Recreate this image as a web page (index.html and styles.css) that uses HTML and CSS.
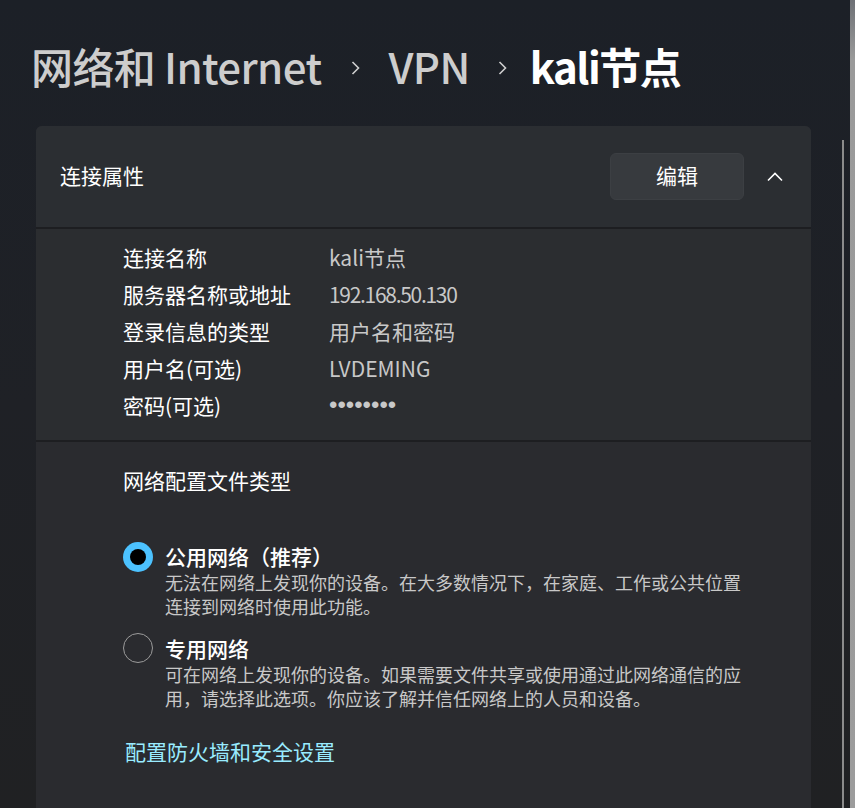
FILE: index.html
```html
<!DOCTYPE html>
<html lang="zh-CN">
<head>
<meta charset="utf-8">
<title>kali节点</title>
<link rel="stylesheet" href="styles.css">
</head>
<body>
<div class="window">
  <main class="content">
    <h1 class="breadcrumb">
      <span class="crumb">网络和 Internet</span>
      <svg class="sep" width="12" height="16" viewBox="0 0 12 16"><path d="M3.5 2 L9.5 8 L3.5 14" fill="none" stroke="#cfcfcf" stroke-width="1.6"/></svg>
      <span class="crumb">VPN</span>
      <svg class="sep sep-last" width="12" height="16" viewBox="0 0 12 16"><path d="M3.5 2 L9.5 8 L3.5 14" fill="none" stroke="#cfcfcf" stroke-width="1.6"/></svg>
      <span class="crumb current">kali节点</span>
    </h1>

    <section class="card">
      <div class="card-header">
        <span class="card-title">连接属性</span>
        <button class="btn">编辑</button>
        <svg class="chev" width="18" height="12" viewBox="0 0 18 12"><path d="M2 9.5 L9 2.5 L16 9.5" fill="none" stroke="#ffffff" stroke-width="1.6"/></svg>
      </div>
      <div class="props">
        <div class="prop"><span class="k">连接名称</span><span class="v">kali节点</span></div>
        <div class="prop"><span class="k">服务器名称或地址</span><span class="v ip">192.168.50.130</span></div>
        <div class="prop"><span class="k">登录信息的类型</span><span class="v">用户名和密码</span></div>
        <div class="prop"><span class="k">用户名(可选)</span><span class="v">LVDEMING</span></div>
        <div class="prop"><span class="k">密码(可选)</span><span class="v dots">••••••••</span></div>
      </div>
      <div class="profile">
        <div class="profile-title">网络配置文件类型</div>
        <div class="radio-item first">
          <span class="radio checked"><span class="dot"></span></span>
          <div class="radio-text">
            <div class="radio-title">公用网络（推荐）</div>
            <div class="radio-desc">无法在网络上发现你的设备。在大多数情况下，在家庭、工作或公共位置<br>连接到网络时使用此功能。</div>
          </div>
        </div>
        <div class="radio-item">
          <span class="radio"></span>
          <div class="radio-text">
            <div class="radio-title">专用网络</div>
            <div class="radio-desc">可在网络上发现你的设备。如果需要文件共享或使用通过此网络通信的应<br>用，请选择此选项。你应该了解并信任网络上的人员和设备。</div>
          </div>
        </div>
        <a class="link" href="#">配置防火墙和安全设置</a>
      </div>
    </section>
  </main>
  <div class="gutter">
    <div class="thumb"></div>
  </div>
  <div class="edge"></div>
</div>
</body>
</html>
```

FILE: styles.css
```css
* { box-sizing: border-box; }
html, body {
  margin: 0;
  padding: 0;
  height: 100%;
  overflow: hidden;
}
body {
  font-family: "Noto Sans CJK SC", "Noto Sans", sans-serif;
  color: #ffffff;
  background: linear-gradient(180deg, #1c2027 0%, #1f2126 50%, #202123 100%);
}
.window {
  display: flex;
  height: 808px;
}
.content {
  width: 842px;
  padding-left: 31px;
}
.breadcrumb {
  margin: 0 0 34px 0;
  padding-top: 39px;
  display: flex;
  align-items: center;
  font-size: 42px;
  font-weight: 500;
  line-height: 53px;
  height: 53px;
  box-sizing: content-box;
}
.crumb { color: #cdcdcd; letter-spacing: -0.6px; }
.crumb.current { color: #ffffff; font-weight: 700; letter-spacing: -1.5px; }
.sep { margin: 4px 27px 0 28px; flex: none; }
.sep.sep-last { margin-left: 26px; margin-right: 22px; }

.card {
  margin-left: 5px;
  width: 775px;
  background: #2a2c30;
  border-radius: 6px 6px 0 0;
  overflow: hidden;
}
.card-header {
  height: 101px;
  display: flex;
  align-items: center;
  padding: 0 27px 0 24px;
  background: #2b2e32;
  border-bottom: 2px solid #1d1e21;
  box-sizing: content-box;
}
.card-title { font-size: 21px; flex: 1; padding-bottom: 3px; }
.btn {
  width: 134px;
  height: 47px;
  background: #373a3e;
  border: 1px solid #3c3f43;
  border-radius: 6px;
  color: #ffffff;
  font-family: inherit;
  font-size: 21px;
  padding: 0 0 3px 0;
  margin-right: 22px;
}
.chev { display: block; }

.props {
  padding: 9px 0 17px 87px;
  border-bottom: 2px solid #1d1e21;
  background: #2b2d30;
}
.prop {
  display: flex;
  height: 37px;
  align-items: center;
  font-size: 21px;
}
.k { width: 206px; color: #ffffff; }
.v { color: #c8c8c8; }
.v.ip { letter-spacing: -1.3px; }
.v.dots {
  font-family: "Liberation Sans", sans-serif;
  font-size: 24px;
  letter-spacing: 0;
}

.profile {
  padding: 23px 0 60px 87px;
  background: #2a2b2f;
}
.profile-title {
  font-size: 21px;
  line-height: 30px;
  margin-bottom: 47px;
}
.radio-item {
  display: flex;
  gap: 12px;
  margin-bottom: 16px;
}
.radio {
  width: 30px;
  height: 30px;
  border-radius: 50%;
  border: 1.5px solid #9b9b9b;
  margin-top: -1px;
  flex: none;
  display: flex;
  align-items: center;
  justify-content: center;
}
.radio.checked {
  background: #4cc2ff;
  border: none;
  margin-top: 0;
}
.dot {
  width: 16px;
  height: 16px;
  border-radius: 50%;
  background: #000000;
}
.radio-title {
  font-size: 21px;
  line-height: 28px;
  font-weight: 500;
}
.radio-desc {
  font-size: 18px;
  line-height: 24px;
  color: #c8c8c8;
}
.link {
  display: inline-block;
  margin-top: 10px;
  margin-left: 2px;
  font-size: 21px;
  line-height: 30px;
  color: #99ebff;
  text-decoration: none;
}

.gutter {
  width: 8px;
  padding-top: 140px;
}
.thumb {
  width: 2px;
  height: 100%;
  background: #8b8b8b;
}
.edge {
  width: 5px;
  background: linear-gradient(180deg, #6e7176 0px, #9a9a9a 60px, #9c9c9c 100%);
}
```
